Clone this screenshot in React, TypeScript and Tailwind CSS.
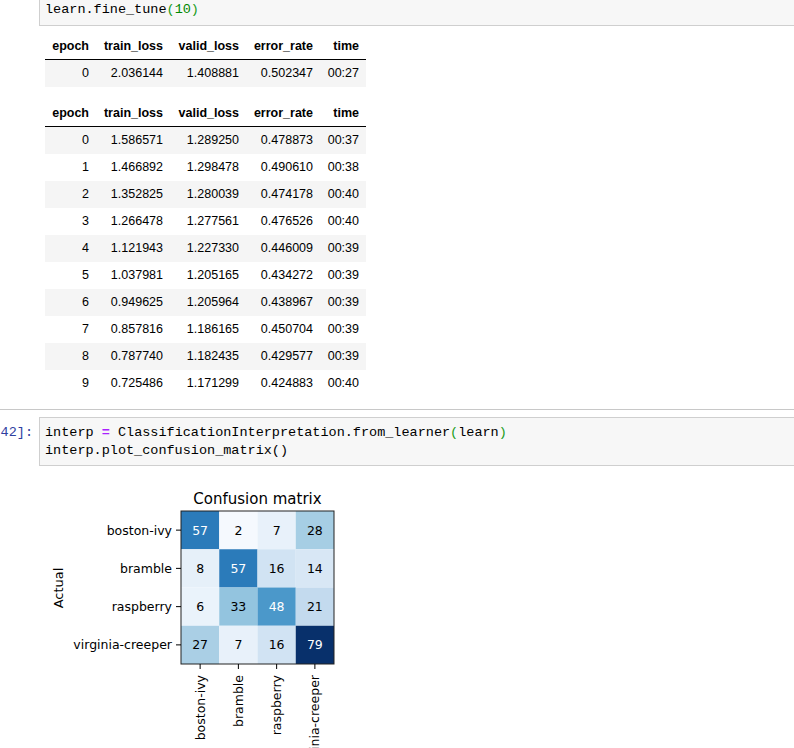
import React from 'react';

type Row = [string, string, string, string, string];

const headers = ['epoch', 'train_loss', 'valid_loss', 'error_rate', 'time'];
const colWidths = ['w-[51px]', 'w-[74px]', 'w-[76px]', 'w-[74px]', 'w-[46px]'];

const firstRun: Row[] = [['0', '2.036144', '1.408881', '0.502347', '00:27']];

const fineTune: Row[] = [
  ['0', '1.586571', '1.289250', '0.478873', '00:37'],
  ['1', '1.466892', '1.298478', '0.490610', '00:38'],
  ['2', '1.352825', '1.280039', '0.474178', '00:40'],
  ['3', '1.266478', '1.277561', '0.476526', '00:40'],
  ['4', '1.121943', '1.227330', '0.446009', '00:39'],
  ['5', '1.037981', '1.205165', '0.434272', '00:39'],
  ['6', '0.949625', '1.205964', '0.438967', '00:39'],
  ['7', '0.857816', '1.186165', '0.450704', '00:39'],
  ['8', '0.787740', '1.182435', '0.429577', '00:39'],
  ['9', '0.725486', '1.171299', '0.424883', '00:40'],
];

const classes = ['boston-ivy', 'bramble', 'raspberry', 'virginia-creeper'];

const matrix = [
  [57, 2, 7, 28],
  [8, 57, 16, 14],
  [6, 33, 48, 21],
  [27, 7, 16, 79],
];

// matplotlib "Blues", sampled per value
const cellColors: Record<number, string> = {
  2: '#f5f9fe',
  6: '#eaf3fb',
  7: '#e8f1fa',
  8: '#e6f0f9',
  14: '#d8e7f5',
  16: '#d1e3f3',
  21: '#c3daee',
  27: '#aacfe5',
  28: '#a6cee4',
  33: '#93c4df',
  48: '#4b98ca',
  57: '#2b7bba',
  79: '#08306b',
};

const MetricsTable = ({ rows }: { rows: Row[] }) => (
  <div className="ml-[45px] w-[321px] text-[12.5px] text-black" style={{ fontFamily: '"Liberation Sans", Arial, sans-serif' }}>
    <div className="flex h-[27px] items-center border-b border-black font-bold">
      {headers.map((h, i) => (
        <div key={h} className={`${colWidths[i]} px-[7px] text-right`}>{h}</div>
      ))}
    </div>
    {rows.map((r, ri) => (
      <div key={ri} className={`flex h-[27px] items-center ${ri % 2 === 0 ? 'bg-[#f5f5f5]' : 'bg-white'}`}>
        {r.map((v, i) => (
          <div key={i} className={`${colWidths[i]} px-[7px] text-right`}>{v}</div>
        ))}
      </div>
    ))}
  </div>
);

const ConfusionMatrix = () => {
  const x0 = 181;
  const y0 = 511;
  const cell = 38.25;
  const size = cell * 4;
  const font = '"DejaVu Sans", "Liberation Sans", sans-serif';
  return (
    <svg width="400" height="290" className="block" style={{ fontFamily: font }}>
      <g transform="translate(0,-466)">
        <text x={x0 + size / 2} y={499} textAnchor="middle" dominantBaseline="central" fontSize="15" fill="#000">
          Confusion matrix
        </text>

        {matrix.map((row, r) =>
          row.map((v, c) => (
            <g key={`${r}-${c}`}>
              <rect x={x0 + c * cell} y={y0 + r * cell} width={cell} height={cell} fill={cellColors[v]} />
              <text
                x={x0 + c * cell + cell / 2}
                y={y0 + r * cell + cell / 2}
                textAnchor="middle"
                dominantBaseline="central"
                fontSize="12.5"
                fill={v > 39.5 ? '#ffffff' : '#000000'}
              >
                {v}
              </text>
            </g>
          ))
        )}
        <rect x={x0} y={y0} width={size} height={size} fill="none" stroke="#222" strokeWidth="1" />

        {/* y ticks */}
        {classes.map((name, i) => {
          const cy = y0 + i * cell + cell / 2;
          return (
            <g key={name}>
              <line x1={x0 - 5} y1={cy} x2={x0} y2={cy} stroke="#000" strokeWidth="1" />
              <text x={x0 - 9} y={cy} textAnchor="end" dominantBaseline="central" fontSize="12.5" fill="#000">
                {name}
              </text>
            </g>
          );
        })}

        {/* x ticks */}
        {classes.map((name, i) => {
          const cx = x0 + i * cell + cell / 2;
          return (
            <g key={name}>
              <line x1={cx} y1={y0 + size} x2={cx} y2={y0 + size + 5} stroke="#000" strokeWidth="1" />
              <text
                transform={`translate(${cx},${y0 + size + 11}) rotate(-90)`}
                textAnchor="end"
                dominantBaseline="central"
                fontSize="12.5"
                fill="#000"
              >
                {name}
              </text>
            </g>
          );
        })}

        <text transform="translate(58.5,588) rotate(-90)" textAnchor="middle" dominantBaseline="central" fontSize="13" fill="#000">
          Actual
        </text>
      </g>
    </svg>
  );
};

export default function App() {
  const mono = { fontFamily: '"Liberation Mono", "DejaVu Sans Mono", monospace' };
  return (
    <div className="relative h-[748px] w-[794px] overflow-hidden bg-white">
      {/* cell: fine_tune */}
      <div className="pl-[39px]">
        <div className="h-[26px] border-b border-l border-[#cfcfcf] bg-[#f7f7f7] pl-[5px] pt-[1px] text-[13.5px] leading-[18px] text-black" style={mono}>
          learn.fine_tune<span className="text-[#1a9c1a]">(</span>
          <span className="text-[#008800]">10</span>
          <span className="text-[#1a9c1a]">)</span>
        </div>
      </div>

      <div className="mt-[7px]">
        <MetricsTable rows={firstRun} />
      </div>
      <div className="mt-[13px]">
        <MetricsTable rows={fineTune} />
      </div>

      <div className="mt-[12px] h-px w-full bg-[#c8c8c8]" />

      {/* cell: confusion matrix */}
      <div className="mt-[7px] flex">
        <div className="w-[39px] shrink-0 pr-[6px] pt-[7px] text-right text-[13.5px] leading-[18px] text-[#303f9f]" style={mono}>
          42]:
        </div>
        <div className="flex-1 border-y border-l border-[#cfcfcf] bg-[#f7f7f7] pb-[5px] pl-[5px] pt-[6px] text-[13.5px] leading-[18px] text-black" style={mono}>
          <div className="whitespace-pre">
            interp <span className="font-bold text-[#aa22ff]">=</span> ClassificationInterpretation.from_learner
            <span className="text-[#1a9c1a]">(</span>learn<span className="text-[#1a9c1a]">)</span>
          </div>
          <div className="whitespace-pre">interp.plot_confusion_matrix()</div>
        </div>
      </div>

      <ConfusionMatrix />
    </div>
  );
}
